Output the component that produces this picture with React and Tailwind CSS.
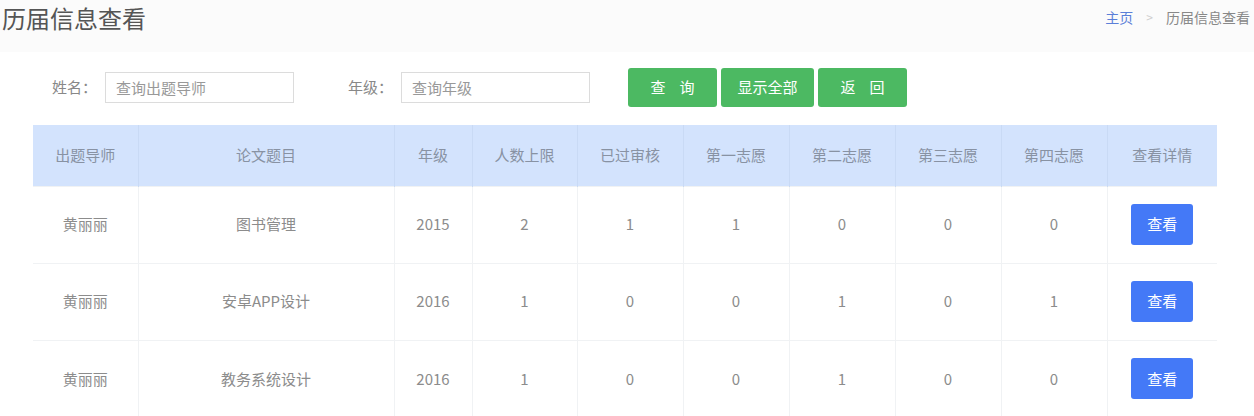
import React from 'react';

const columns = [
    { label: '出题导师', w: 'w-[105px]' },
    { label: '论文题目', w: 'w-[256px]' },
    { label: '年级', w: 'w-[78px]' },
    { label: '人数上限', w: 'w-[105px]' },
    { label: '已过审核', w: 'w-[106px]' },
    { label: '第一志愿', w: 'w-[106px]' },
    { label: '第二志愿', w: 'w-[106px]' },
    { label: '第三志愿', w: 'w-[106px]' },
    { label: '第四志愿', w: 'w-[106px]' },
    { label: '查看详情', w: 'w-[110px]' },
];

const rows = [
    ['黄丽丽', '图书管理', '2015', '2', '1', '1', '0', '0', '0'],
    ['黄丽丽', '安卓APP设计', '2016', '1', '0', '0', '1', '0', '1'],
    ['黄丽丽', '教务系统设计', '2016', '1', '0', '0', '1', '0', '0'],
];

export default function App() {
    return (
        <div className="w-[1254px] h-[416px] overflow-hidden bg-white text-[#888] font-['Noto_Sans_CJK_SC','Noto_Sans',sans-serif]">
            {/* Header: title + breadcrumb */}
            <header className="h-[52px] flex justify-between items-start bg-[#fbfbfb]">
                <h1 className="pl-[2px] pt-[3px] text-[24px] leading-[30px] text-[#555]">历届信息查看</h1>
                <div className="flex items-center pt-[7px] pr-[4px] text-[14px] leading-[20px]">
                    <span className="text-[#5b7fd8]">主页</span>
                    <span className="mx-[13px] text-[#cfcfcf] text-[12px]">&gt;</span>
                    <span className="text-[#888]">历届信息查看</span>
                </div>
            </header>

            {/* Search form */}
            <div className="flex items-center pl-[52px] mt-[16px] h-[39px]">
                <label className="w-[45px] text-[15px] text-[#888] mr-[8px]">姓名：</label>
                <input
                    className="w-[189px] h-[31px] border border-[#dcdcdc] px-[10px] text-[15px] outline-none placeholder:text-[#999]"
                    placeholder="查询出题导师"
                />
                <label className="w-[45px] ml-[54px] text-[15px] text-[#888] mr-[8px]">年级：</label>
                <input
                    className="w-[189px] h-[31px] border border-[#dcdcdc] px-[10px] text-[15px] outline-none placeholder:text-[#999]"
                    placeholder="查询年级"
                />
                <div className="flex ml-[38px] gap-[4px]">
                    <button className="w-[89px] h-[39px] rounded-[3px] bg-[#4cb962] text-white text-[15px] tracking-[14px] pl-[14px]">查询</button>
                    <button className="w-[93px] h-[39px] rounded-[3px] bg-[#4cb962] text-white text-[15px]">显示全部</button>
                    <button className="w-[89px] h-[39px] rounded-[3px] bg-[#4cb962] text-white text-[15px] tracking-[14px] pl-[14px]">返回</button>
                </div>
            </div>

            {/* Table */}
            <table className="ml-[33px] mt-[18px] border-collapse table-fixed text-[15px]">
                <thead>
                    <tr className="h-[61px] bg-[#d3e3fd]">
                        {columns.map((c) => (
                            <th key={c.label} className={`${c.w} font-normal text-[#8892a3] border-l border-[#c9daf5] first:border-l-0`}>
                                {c.label}
                            </th>
                        ))}
                    </tr>
                </thead>
                <tbody>
                    {rows.map((r, i) => (
                        <tr key={i} className="h-[77px] border-t border-[#f0f2f4]">
                            {r.map((v, j) => (
                                <td key={j} className="text-center text-[#8c8c8c] border-l border-[#f0f2f4] first:border-l-0">
                                    {v}
                                </td>
                            ))}
                            <td className="text-center border-l border-[#f0f2f4]">
                                <button className="w-[62px] h-[41px] rounded-[3px] bg-[#4479f7] text-white text-[15px]">查看</button>
                            </td>
                        </tr>
                    ))}
                </tbody>
            </table>
        </div>
    );
}
